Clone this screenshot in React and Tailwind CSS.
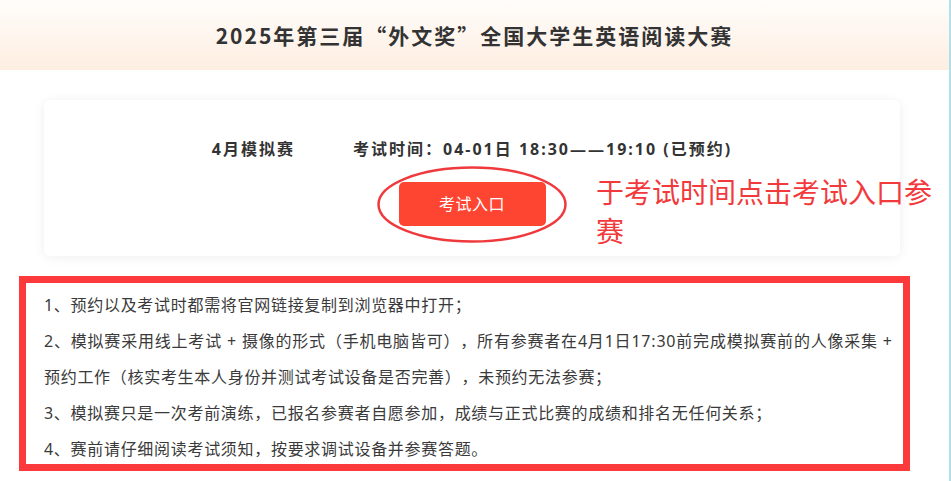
import React from 'react';

const App = () => {
  return (
    <div className="relative w-full h-[481px] bg-white border-r-2 border-[#b3dfe8] overflow-hidden [text-spacing-trim:space-all] font-['Noto_Sans','Noto_Sans_CJK_SC',sans-serif]">
      <header className="h-[70px] bg-gradient-to-b from-[#fffdfb] to-[#fdeee1] rounded-tr-[6px] flex items-center justify-center">
        <h1 className="text-[21px] leading-none font-bold tracking-[2px] text-[#333] font-['Noto_Sans_CJK_SC',sans-serif]">
          2025年第三届“外文奖”全国大学生英语阅读大赛
        </h1>
      </header>

      <div className="ml-[44px] mt-[30px] w-[856px] h-[156px] rounded-[6px] bg-white shadow-[0_1px_12px_rgba(0,0,0,0.07)] flex flex-col items-center pt-[37px]">
        <div className="h-[24px] flex items-center gap-[58px] text-[16px] font-bold tracking-[2px] text-[#333]">
          <span>4月模拟赛</span>
          <span>考试时间：04-01日 18:30——19:10 (已预约)</span>
        </div>
        <button className="mt-[21px] w-[147px] h-[44px] rounded-[5px] bg-[#fe4532] text-white text-[16px] tracking-[0.5px]">
          考试入口
        </button>
      </div>

      <div className="ml-[19px] mt-[20px] w-[891px] h-[195px] border-[7px] border-[#fd3a3b] pl-[18px] pt-[4px] text-[16px] tracking-[0.7px] text-[#3a3a3a] leading-[36px]">
        <p className="whitespace-nowrap">1、预约以及考试时都需将官网链接复制到浏览器中打开；</p>
        <p className="whitespace-nowrap tracking-[0.8px]">
          2、模拟赛采用线上考试<span className="mx-[5px]">+</span>摄像的形式（手机电脑皆可），所有参赛者在4月1日17:30前完成模拟赛前的人像采集 +
        </p>
        <p className="whitespace-nowrap">预约工作（核实考生本人身份并测试考试设备是否完善），未预约无法参赛；</p>
        <p className="whitespace-nowrap">3、模拟赛只是一次考前演练，已报名参赛者自愿参加，成绩与正式比赛的成绩和排名无任何关系；</p>
        <p className="whitespace-nowrap">4、赛前请仔细阅读考试须知，按要求调试设备并参赛答题。</p>
      </div>

      {/* annotation drawn over the screenshot */}
      <svg className="absolute left-[377px] top-[166px]" width="190" height="77" viewBox="0 0 190 77">
        <ellipse cx="95" cy="38.5" rx="93.5" ry="37" fill="none" stroke="#f0393c" strokeWidth="2.5" />
      </svg>
      <p className="absolute left-[596px] top-[173px] w-[350px] text-[28px] leading-[39px] text-[#f23a3c]">
        于考试时间点击考试入口参赛
      </p>
    </div>
  );
};

export default App;
